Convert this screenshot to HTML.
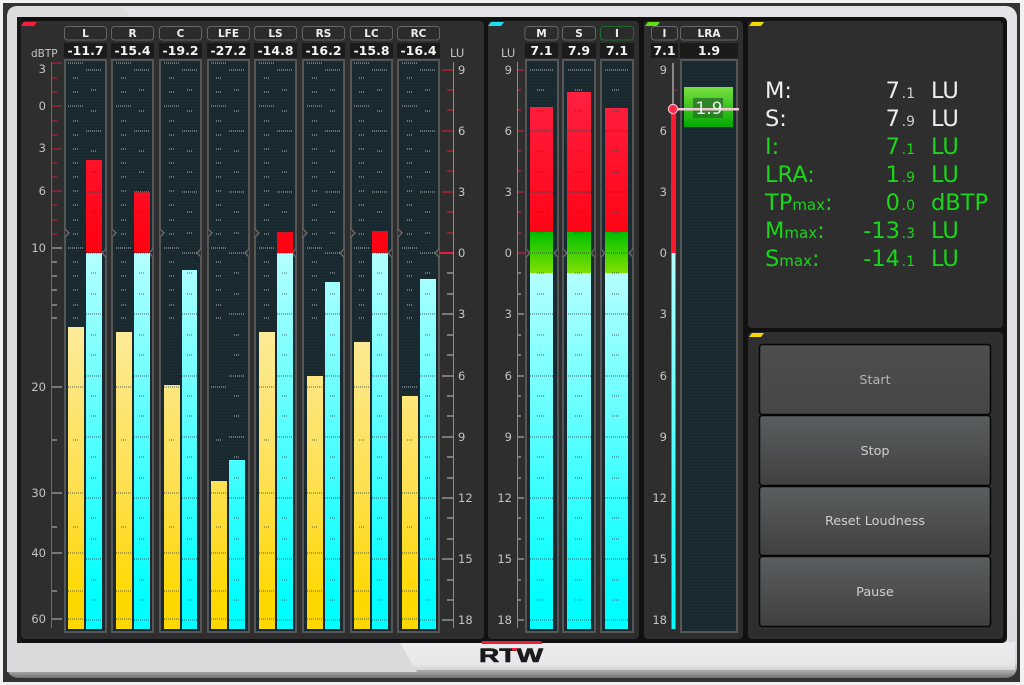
<!DOCTYPE html>
<html><head><meta charset="utf-8"><title>RTW Loudness</title>
<style>
html,body{margin:0;padding:0;width:1024px;height:685px;overflow:hidden;background:#f2f2f2}
svg{display:block}
text{font-family:"DejaVu Sans","Liberation Sans",sans-serif}
.sc{fill:#c4c4c4;font-size:11.5px}
.hd{fill:#eee;font-size:10.5px;font-weight:bold;text-anchor:middle}
.vl{fill:#f4f4f4;font-size:12.5px;font-weight:bold;text-anchor:middle}
.r{font-size:22.5px}
.w{fill:#eeeeee}.g{fill:#1ad61a}
.s{font-size:14px}.m{font-size:15px}
.b{fill:#cfcfcf;font-size:12.8px;text-anchor:middle}
</style></head><body>
<svg width="1024" height="685" viewBox="0 0 1024 685" xmlns="http://www.w3.org/2000/svg">
<defs>
<pattern id="scan" width="4" height="3" patternUnits="userSpaceOnUse"><rect width="4" height="3" fill="#1b2b32"/><rect width="4" height="1" fill="#18272e"/></pattern>
<linearGradient id="yl" gradientUnits="userSpaceOnUse" x1="0" y1="320" x2="0" y2="600"><stop offset="0" stop-color="#fdeb9e"/><stop offset=".6" stop-color="#fee04e"/><stop offset="1" stop-color="#ffd800"/></linearGradient>
<linearGradient id="cy" gradientUnits="userSpaceOnUse" x1="0" y1="253" x2="0" y2="600"><stop offset="0" stop-color="#b4ffff"/><stop offset="1" stop-color="#00ffff"/></linearGradient>
<linearGradient id="cy2" gradientUnits="userSpaceOnUse" x1="0" y1="273" x2="0" y2="600"><stop offset="0" stop-color="#b4ffff"/><stop offset="1" stop-color="#00ffff"/></linearGradient>
<linearGradient id="rd" gradientUnits="userSpaceOnUse" x1="0" y1="92" x2="0" y2="253"><stop offset="0" stop-color="#ff2040"/><stop offset="1" stop-color="#ff0010"/></linearGradient>
<linearGradient id="gr" gradientUnits="userSpaceOnUse" x1="0" y1="232" x2="0" y2="273"><stop offset="0" stop-color="#00c000"/><stop offset="1" stop-color="#80e000"/></linearGradient>
<linearGradient id="lra" x1="0" y1="0" x2="0" y2="1"><stop offset="0" stop-color="#78e040"/><stop offset="1" stop-color="#00a800"/></linearGradient>
<linearGradient id="sil" x1="0" y1="0" x2="0" y2="1"><stop offset="0" stop-color="#e4e4e6"/><stop offset=".975" stop-color="#dcdcde"/><stop offset=".992" stop-color="#a0a0a0"/><stop offset="1" stop-color="#707070"/></linearGradient>
<linearGradient id="sil2" x1="0" y1="0" x2="0" y2="1"><stop offset="0" stop-color="#ececee"/><stop offset=".8" stop-color="#e8e8ea"/><stop offset="1" stop-color="#d2d2d4"/></linearGradient>
<linearGradient id="btn" x1="0" y1="0" x2="0" y2="1"><stop offset="0" stop-color="#5a5e60"/><stop offset="1" stop-color="#404040"/></linearGradient>
<linearGradient id="btn1" x1="0" y1="0" x2="0" y2="1"><stop offset="0" stop-color="#4e4e4e"/><stop offset="1" stop-color="#464646"/></linearGradient>
<g id="d" fill="none" stroke-dasharray="1 1">
<path d="M0 63h16M0 106h16M0 248h16M0 387h16M0 493h16M0 553h16M0 591h16M0 619h16M5 78h6M5 92h6M5 121h6M5 135h6M5 149h6M5 163h6M5 177h6M5 191h6M5 205h6M5 220h6M5 234h6M5 262h6M5 276h6M5 290h6M5 305h6M5 318h6M5 440h6M5 527h6"/>
<path d="M18 70h16M18 131h16M18 192h16M18 253h16M18 314h16M18 376h16M18 437h16M18 498h16M18 559h16M18 620h16M23 90h6M23 111h6M23 151h6M23 172h6M23 212h6M23 233h6M23 273h6M23 294h6M23 335h6M23 355h6M23 396h6M23 416h6M23 457h6M23 478h6M23 518h6M23 539h6M23 580h6M23 600h6"/>
</g>
<g id="e" fill="none" stroke-dasharray="1 1"><path d="M0 70h23M0 131h23M0 192h23M0 253h23M0 314h23M0 376h23M0 437h23M0 498h23M0 559h23M0 620h23M7 90h8M7 111h8M7 151h8M7 172h8M7 212h8M7 233h8M7 273h8M7 294h8M7 335h8M7 355h8M7 396h8M7 416h8M7 457h8M7 478h8M7 518h8M7 539h8M7 580h8M7 600h8"/></g>
<g id="fr"><rect x="1" y="60" width="41" height="572" fill="url(#scan)" stroke="#565656" stroke-width="2"/><path d="M1 229l4 4-4 4M42 249l-4 4 4 4" fill="#2e2e2e" stroke="#666" stroke-width="1.500"/></g>
<g id="fs"><rect x="1" y="60" width="32" height="572" fill="url(#scan)" stroke="#565656" stroke-width="2"/><path d="M1 249l4 4-4 4M33 249l-4 4 4 4" fill="#2e2e2e" stroke="#666" stroke-width="1.500"/></g>
<g id="hb"><rect x="0.5" y="26.500" width="42" height="13.500" rx="3" fill="#2b2b2b" stroke="#666"/></g>
<clipPath id="bars">
<rect x="68" y="327" width="16" height="302"/><rect x="86" y="160" width="16" height="469"/>
<rect x="116" y="332" width="16" height="297"/><rect x="134" y="192" width="16" height="437"/>
<rect x="164" y="385" width="16" height="244"/><rect x="182" y="270" width="15" height="359"/>
<rect x="211" y="481" width="16" height="148"/><rect x="229" y="460" width="16" height="169"/>
<rect x="259" y="332" width="16" height="297"/><rect x="277" y="232" width="16" height="397"/>
<rect x="307" y="376" width="16" height="253"/><rect x="325" y="282" width="15" height="347"/>
<rect x="354" y="342" width="16" height="287"/><rect x="372" y="231" width="16" height="398"/>
<rect x="402" y="396" width="16" height="233"/><rect x="420" y="279" width="16" height="350"/>
<rect x="530" y="107" width="23" height="522"/><rect x="567" y="92" width="24" height="537"/><rect x="605" y="108" width="23" height="521"/>
</clipPath>
</defs>

<!-- frame -->
<rect width="1024" height="685" fill="#f2f2f2"/>
<rect x="3" y="3" width="1017" height="679" fill="#333"/>
<rect x="7" y="6" width="1010" height="672" rx="11" fill="url(#sil)"/>
<path d="M7 17Q7 6 18 6H120L130 17V642H7Z" fill="#dcdcdc"/>
<path d="M7 642H400L417 672H7Z" fill="#dadadc"/>
<path d="M400 642L415 670H1015V642Z" fill="url(#sil2)"/>
<rect x="17" y="17" width="990" height="626" rx="5" fill="#111"/>
<rect x="17" y="17" width="4" height="626" fill="#181818"/>

<!-- panels -->
<rect x="21" y="21" width="463" height="618" rx="4" fill="#2e2e2e"/>
<rect x="488" y="21" width="151" height="618" rx="4" fill="#2e2e2e"/>
<rect x="644" y="21" width="99" height="618" rx="4" fill="#2e2e2e"/>
<rect x="748" y="21" width="255" height="307" rx="4" fill="#2e2e2e"/>
<rect x="748" y="332" width="255" height="307" rx="4" fill="#2e2e2e"/>
<path d="M24 22h13l-3 4H21z" fill="#ff1f3c"/>
<path d="M491 22h13l-3 4h-13z" fill="#18e0f0"/>
<path d="M648 22h12l-3 4h-12z" fill="#60e010"/>
<path d="M752 22h12l-3 4h-12z" fill="#f4d800"/>
<path d="M752 333h12l-3 4h-12z" fill="#f4d800"/>

<!-- channel frames -->
<use href="#fr" x="64"/><use href="#fr" x="111"/><use href="#fr" x="159"/><use href="#fr" x="207"/><use href="#fr" x="254"/><use href="#fr" x="302"/><use href="#fr" x="350"/><use href="#fr" x="397"/>
<g stroke="#bcbcbc">
<use href="#d" x="68"/><use href="#d" x="116"/><use href="#d" x="164"/><use href="#d" x="211"/><use href="#d" x="259"/><use href="#d" x="307"/><use href="#d" x="354"/><use href="#d" x="402"/>
</g>

<!-- headers -->
<use href="#hb" x="64"/><use href="#hb" x="111"/><use href="#hb" x="159"/><use href="#hb" x="207"/><use href="#hb" x="254"/><use href="#hb" x="302"/><use href="#hb" x="350"/><use href="#hb" x="397"/>
<g fill="#1b1b1b"><rect x="64" y="43" width="43" height="15"/><rect x="111" y="43" width="43" height="15"/><rect x="159" y="43" width="43" height="15"/><rect x="207" y="43" width="43" height="15"/><rect x="254" y="43" width="43" height="15"/><rect x="302" y="43" width="43" height="15"/><rect x="350" y="43" width="43" height="15"/><rect x="397" y="43" width="43" height="15"/></g>
<text class="hd" x="85.500" y="37">L</text><text class="hd" x="132.500" y="37">R</text><text class="hd" x="180.500" y="37">C</text><text class="hd" x="228.500" y="37">LFE</text><text class="hd" x="275.500" y="37">LS</text><text class="hd" x="323.500" y="37">RS</text><text class="hd" x="371.500" y="37">LC</text><text class="hd" x="418.500" y="37">RC</text>
<text class="vl" x="85.500" y="55">-11.7</text><text class="vl" x="132.500" y="55">-15.4</text><text class="vl" x="180.500" y="55">-19.2</text><text class="vl" x="228.500" y="55">-27.2</text><text class="vl" x="275.500" y="55">-14.8</text><text class="vl" x="323.500" y="55">-16.2</text><text class="vl" x="371.500" y="55">-15.8</text><text class="vl" x="418.500" y="55">-16.4</text>

<!-- bars -->
<g fill="url(#yl)">
<rect x="68" y="327" width="16" height="302"/><rect x="116" y="332" width="16" height="297"/><rect x="164" y="385" width="16" height="244"/><rect x="211" y="481" width="16" height="148"/><rect x="259" y="332" width="16" height="297"/><rect x="307" y="376" width="16" height="253"/><rect x="354" y="342" width="16" height="287"/><rect x="402" y="396" width="16" height="233"/>
</g>
<g fill="url(#cy)">
<rect x="86" y="253" width="16" height="376"/><rect x="134" y="253" width="16" height="376"/><rect x="182" y="270" width="15" height="359"/><rect x="229" y="460" width="16" height="169"/><rect x="277" y="253" width="16" height="376"/><rect x="325" y="282" width="15" height="347"/><rect x="372" y="253" width="16" height="376"/><rect x="420" y="279" width="16" height="350"/>
</g>
<g fill="url(#rd)">
<rect x="86" y="160" width="16" height="93"/><rect x="134" y="192" width="16" height="61"/><rect x="277" y="232" width="16" height="21"/><rect x="372" y="231" width="16" height="22"/>
</g>

<!-- panel 2 -->
<use href="#fs" x="525"/><use href="#fs" x="562"/><use href="#fs" x="600"/>
<g stroke="#bcbcbc"><use href="#e" x="530"/><use href="#e" x="568"/><use href="#e" x="605"/></g>
<rect x="530" y="107" width="23" height="125" fill="url(#rd)"/><rect x="530" y="232" width="23" height="41" fill="url(#gr)"/><rect x="530" y="273" width="23" height="356" fill="url(#cy2)"/>
<rect x="567" y="92" width="24" height="140" fill="url(#rd)"/><rect x="567" y="232" width="24" height="41" fill="url(#gr)"/><rect x="567" y="273" width="24" height="356" fill="url(#cy2)"/>
<rect x="605" y="108" width="23" height="124" fill="url(#rd)"/><rect x="605" y="232" width="23" height="41" fill="url(#gr)"/><rect x="605" y="273" width="23" height="356" fill="url(#cy2)"/>

<!-- dark dots over bars -->
<g stroke="#2a4046" stroke-opacity=".8" clip-path="url(#bars)">
<use href="#d" x="68"/><use href="#d" x="116"/><use href="#d" x="164"/><use href="#d" x="211"/><use href="#d" x="259"/><use href="#d" x="307"/><use href="#d" x="354"/><use href="#d" x="402"/>
<use href="#e" x="530"/><use href="#e" x="568"/><use href="#e" x="605"/>
</g>

<!-- panel 2 headers -->
<rect x="525" y="26.500" width="33" height="13.500" rx="3" fill="#2b2b2b" stroke="#666"/><rect x="562.500" y="26.500" width="33" height="13.500" rx="3" fill="#2b2b2b" stroke="#666"/><rect x="600.500" y="26.500" width="33" height="13.500" rx="3" fill="#2b2b2b" stroke="#1f6a2a"/>
<rect x="525" y="43" width="33" height="15" fill="#1b1b1b"/><rect x="562" y="43" width="34" height="15" fill="#1b1b1b"/><rect x="600" y="43" width="34" height="15" fill="#1b1b1b"/>
<text class="hd" x="541.500" y="37">M</text><text class="hd" x="579" y="37">S</text><text class="hd" x="617" y="37">I</text>
<text class="vl" x="541.500" y="55">7.1</text><text class="vl" x="579" y="55">7.9</text><text class="vl" x="617" y="55">7.1</text>

<!-- panel 3 -->
<rect x="651.500" y="26.500" width="26" height="13.500" rx="3" fill="#2b2b2b" stroke="#666"/><rect x="680.500" y="26.500" width="57" height="13.500" rx="3" fill="#2b2b2b" stroke="#666"/>
<rect x="651" y="43" width="27" height="15" fill="#1b1b1b"/><rect x="680" y="43" width="58" height="15" fill="#1b1b1b"/>
<text class="hd" x="664.500" y="37">I</text><text class="hd" x="709" y="37">LRA</text>
<text class="vl" x="664.500" y="55">7.1</text><text class="vl" x="709" y="55">1.9</text>
<rect x="681" y="60" width="56" height="572" fill="url(#scan)" stroke="#565656" stroke-width="2"/>
<rect x="684" y="87" width="49" height="40" fill="url(#lra)"/>
<rect x="693" y="98" width="30" height="20" fill="#2a722a" opacity=".8"/>
<rect x="672" y="63" width="2" height="46" fill="#888"/>
<path d="M674 90h3" stroke="#a02a3a"/>
<rect x="671" y="109" width="5" height="144" fill="#ff1830"/>
<rect x="671.500" y="253" width="4" height="376" fill="url(#cy)"/>
<rect x="672" y="108" width="67" height="2.500" fill="#f3c8d4"/>
<circle cx="673" cy="109" r="4.600" fill="#ff2a4a" stroke="#f5c0cc" stroke-width="1.200"/>
<text x="709" y="114" fill="#e8f4e8" font-size="17" text-anchor="middle">1.9</text>

<!-- left scale -->
<path d="M51.500 62V628" stroke="#6a6a6a" stroke-width="1" fill="none"/>
<g stroke="#c8203a" stroke-width="1" fill="none"><path d="M52 63h10M52 78h5M52 92h5M52 106h10M52 121h5M52 135h5M52 149h10M52 163h5M52 177h5M52 191h10M52 205h5M52 220h5M52 234h5" /></g>
<g stroke="#c4c4c4" stroke-width="1" fill="none"><path d="M52 248h10M52 262h5M52 276h5M52 290h5M52 305h5M52 318h5M52 387h10M52 440h5M52 493h10M52 527h5M52 553h10M52 591h5M52 619h10"/></g>
<text class="sc" x="31" y="57" style="font-size:10.500px">dBTP</text>
<g class="sc" text-anchor="end"><text x="46" y="73">3</text><text x="46" y="110">0</text><text x="46" y="152">3</text><text x="46" y="195">6</text><text x="46" y="252">10</text><text x="46" y="391">20</text><text x="46" y="497">30</text><text x="46" y="557">40</text><text x="46" y="623">60</text></g>

<!-- right scale -->
<path d="M453.500 62V628" stroke="#8a8a8a" fill="none"/>
<g stroke="#e0203a" fill="none"><path d="M442 70h11M447 90h6M447 110h6M442 131h11M447 151h6M447 171h6M442 192h11M447 212h6M447 233h6"/><path d="M439 253h14" stroke-width="2"/></g>
<g stroke="#c4c4c4" fill="none"><path d="M447 273h6M447 294h6M442 314h11M447 335h6M447 355h6M442 376h11M447 396h6M447 416h6M442 437h11M447 457h6M447 478h6M442 498h11M447 518h6M447 539h6M442 559h11M447 580h6M447 600h6M442 620h11"/></g>
<text class="sc" x="450" y="57">LU</text>
<g class="sc"><text x="458" y="74">9</text><text x="458" y="135">6</text><text x="458" y="196">3</text><text x="458" y="257">0</text><text x="458" y="318">3</text><text x="458" y="380">6</text><text x="458" y="441">9</text><text x="458" y="502">12</text><text x="458" y="563">15</text><text x="458" y="624">18</text></g>

<!-- panel 2 scale -->
<path d="M517.500 62V628" stroke="#8a8a8a" fill="none"/>
<g stroke="#e0203a" fill="none"><path d="M518 70h6M518 90h3M518 110h3M518 131h6M518 151h3M518 171h3M518 192h6M518 212h3M518 233h3M518 253h7"/></g>
<g stroke="#c4c4c4" fill="none"><path d="M518 273h3M518 294h3M518 314h6M518 335h3M518 355h3M518 376h6M518 396h3M518 416h3M518 437h6M518 457h3M518 478h3M518 498h6M518 518h3M518 539h3M518 559h6M518 580h3M518 600h3M518 620h6"/></g>
<text class="sc" x="501" y="57">LU</text>
<g class="sc" text-anchor="end"><text x="512" y="74">9</text><text x="512" y="135">6</text><text x="512" y="196">3</text><text x="512" y="257">0</text><text x="512" y="318">3</text><text x="512" y="380">6</text><text x="512" y="441">9</text><text x="512" y="502">12</text><text x="512" y="563">15</text><text x="512" y="624">18</text></g>

<!-- panel 3 scale -->
<g class="sc" text-anchor="end"><text x="667" y="74">9</text><text x="667" y="135">6</text><text x="667" y="196">3</text><text x="667" y="257">0</text><text x="667" y="318">3</text><text x="667" y="380">6</text><text x="667" y="441">9</text><text x="667" y="502">12</text><text x="667" y="563">15</text><text x="667" y="624">18</text></g>

<!-- readout -->
<g class="r w">
<text x="765" y="98">M:</text><text x="765" y="126">S:</text>
<text x="900" y="98" text-anchor="end">7</text><text x="900" y="126" text-anchor="end">7</text>
<text x="931" y="98">LU</text><text x="931" y="126">LU</text>
</g>
<text class="s w" x="915" y="98" text-anchor="end" style="fill:#cfcfcf">.1</text><text class="s w" x="915" y="126" text-anchor="end" style="fill:#cfcfcf">.9</text>
<g class="r g">
<text x="765" y="154">I:</text><text x="765" y="182">LRA:</text>
<text x="765" y="210">TP<tspan class="m">max</tspan>:</text>
<text x="765" y="238">M<tspan class="m">max</tspan>:</text>
<text x="765" y="266">S<tspan class="m">max</tspan>:</text>
<text x="900" y="154" text-anchor="end">7</text><text x="900" y="182" text-anchor="end">1</text><text x="900" y="210" text-anchor="end">0</text><text x="900" y="238" text-anchor="end">-13</text><text x="900" y="266" text-anchor="end">-14</text>
<text x="931" y="154">LU</text><text x="931" y="182">LU</text><text x="931" y="210">dBTP</text><text x="931" y="238">LU</text><text x="931" y="266">LU</text>
</g>
<g class="s g" text-anchor="end"><text x="915" y="154">.1</text><text x="915" y="182">.9</text><text x="915" y="210">.0</text><text x="915" y="238">.3</text><text x="915" y="266">.1</text></g>

<!-- buttons -->
<rect x="759.500" y="344.500" width="231" height="70" rx="3" fill="url(#btn1)" stroke="#050505" stroke-width="1.500"/>
<rect x="759.500" y="415.500" width="231" height="70" rx="3" fill="url(#btn)" stroke="#050505" stroke-width="1.500"/>
<rect x="759.500" y="486.500" width="231" height="69" rx="3" fill="url(#btn)" stroke="#050505" stroke-width="1.500"/>
<rect x="759.500" y="556.500" width="231" height="70" rx="3" fill="url(#btn)" stroke="#050505" stroke-width="1.500"/>
<text class="b" x="875" y="384" style="fill:#b4b4b4">Start</text>
<text class="b" x="875" y="455">Stop</text>
<text class="b" x="875" y="525">Reset Loudness</text>
<text class="b" x="875" y="596">Pause</text>

<!-- logo -->
<path d="M482 644Q480 641 484 641H539Q543 641 542 644Z" fill="#e8203c"/>
<text x="479" y="662" textLength="64" lengthAdjust="spacingAndGlyphs" fill="#1a1a1a" stroke="#1a1a1a" stroke-width=".6" style="font-family:'Liberation Sans',sans-serif;font-weight:bold;font-size:19px">RTW</text>
<rect x="512" y="648" width="5" height="2.500" fill="#e8203c"/>
</svg>
</body></html>
